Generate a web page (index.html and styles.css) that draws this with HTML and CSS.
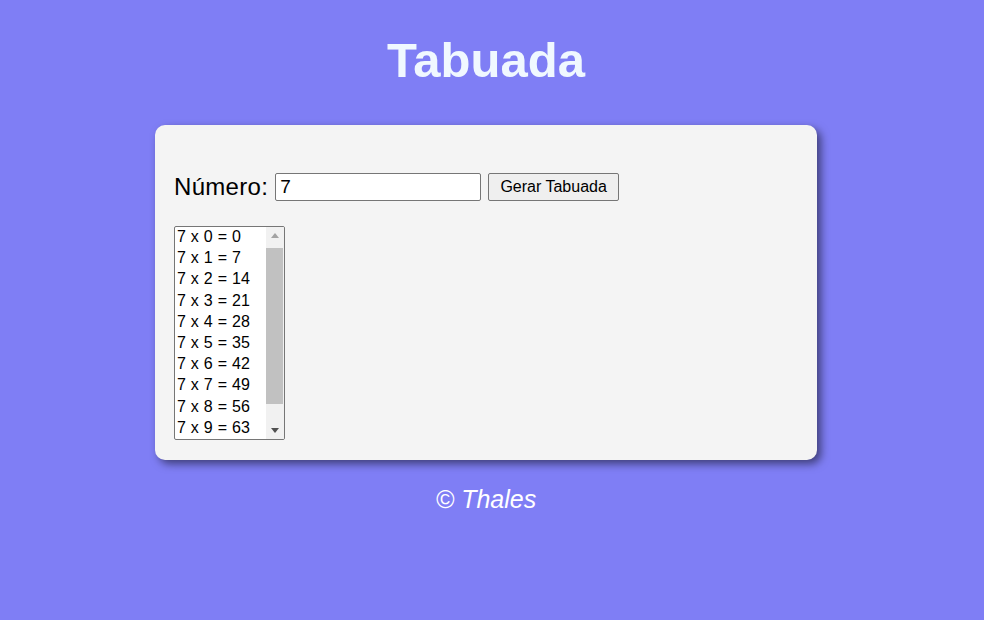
FILE: index.html
```html
<!DOCTYPE html>
<html lang="pt">
<head>
<meta charset="utf-8">
<title>Tabuada</title>
<link rel="stylesheet" href="styles.css">
</head>
<body>
<div class="page">
  <h1 class="title">Tabuada</h1>
  <section class="card">
    <div class="row">
      <label class="label" for="num">Número:</label>
      <input class="num-input" id="num" type="number" value="7">
      <button class="btn" type="button">Gerar Tabuada</button>
    </div>
    <div class="listbox" role="listbox" aria-label="Tabuada">
      <div class="list">
        <div class="item" role="option">7 x 0 = 0</div>
        <div class="item" role="option">7 x 1 = 7</div>
        <div class="item" role="option">7 x 2 = 14</div>
        <div class="item" role="option">7 x 3 = 21</div>
        <div class="item" role="option">7 x 4 = 28</div>
        <div class="item" role="option">7 x 5 = 35</div>
        <div class="item" role="option">7 x 6 = 42</div>
        <div class="item" role="option">7 x 7 = 49</div>
        <div class="item" role="option">7 x 8 = 56</div>
        <div class="item" role="option">7 x 9 = 63</div>
      </div>
      <div class="scrollbar" aria-hidden="true">
        <div class="sb-btn sb-up"><span class="tri-up"></span></div>
        <div class="sb-track"><div class="sb-thumb"></div></div>
        <div class="sb-btn sb-down"><span class="tri-down"></span></div>
      </div>
    </div>
  </section>
  <p class="footer">© Thales</p>
</div>
</body>
</html>
```
FILE: styles.css
```css
html, body {
  margin: 0;
  padding: 0;
}
body {
  background: #7f7ef5;
  font-family: "Liberation Sans", Arial, sans-serif;
}
.page {
  width: 972px;
  padding-top: 32px;
  display: flex;
  flex-direction: column;
  align-items: center;
}
.title {
  margin: 0 0 37px;
  font-size: 49px;
  font-weight: bold;
  color: #f0f8ff;
  line-height: 56px;
}
.card {
  width: 662px;
  box-sizing: border-box;
  background: #f4f4f4;
  border-radius: 10px;
  padding: 20px 19px;
  box-shadow: 4px 4px 8px rgba(0, 0, 0, 0.5);
  display: flex;
  flex-direction: column;
  align-items: flex-start;
}
.row {
  margin-top: 28px;
  display: flex;
  align-items: center;
  height: 28px;
}
.label {
  font-size: 24px;
  color: #000;
  margin-right: 7px;
  letter-spacing: 0.3px;
}
.num-input {
  box-sizing: border-box;
  width: 206px;
  height: 28px;
  font-family: "Liberation Sans", Arial, sans-serif;
  font-size: 19px;
  padding: 1px 4px;
  border: 1px solid #767676;
  border-radius: 2px;
  background: #fff;
  margin: 0 7px 0 0;
  -moz-appearance: textfield;
}
.num-input::-webkit-outer-spin-button,
.num-input::-webkit-inner-spin-button {
  -webkit-appearance: none;
  margin: 0;
}
.btn {
  box-sizing: border-box;
  width: 131px;
  height: 28px;
  font-family: "Liberation Sans", Arial, sans-serif;
  font-size: 16px;
  color: #000;
  background: #efefef;
  border: 1px solid #767676;
  border-radius: 2px;
  padding: 0 6px;
}
.listbox {
  margin-top: 25px;
  box-sizing: border-box;
  width: 111px;
  height: 214px;
  border: 1px solid #767676;
  border-radius: 2px;
  background: #fff;
  display: flex;
  overflow: hidden;
}
.list {
  flex: 1;
  overflow: hidden;
}
.item {
  height: 21.2px;
  line-height: 19.4px;
  padding: 0 2px;
  font-size: 16px;
  color: #000;
  white-space: nowrap;
  letter-spacing: 0.25px;
}
.scrollbar {
  width: 18px;
  background: #f1f1f1;
  display: flex;
  flex-direction: column;
}
.sb-btn {
  height: 17px;
  display: flex;
  align-items: center;
  justify-content: center;
}
.tri-up {
  width: 0;
  height: 0;
  border-left: 4.5px solid transparent;
  border-right: 4.5px solid transparent;
  border-bottom: 5px solid #a3a3a3;
}
.tri-down {
  width: 0;
  height: 0;
  border-left: 4.5px solid transparent;
  border-right: 4.5px solid transparent;
  border-top: 5px solid #505050;
}
.sb-track {
  flex: 1;
  padding: 4px 1px 0 0;
}
.sb-thumb {
  height: 156px;
  background: #c1c1c1;
}
.footer {
  margin: 25px 0 0;
  font-size: 25px;
  font-style: italic;
  color: #fff;
}
```
